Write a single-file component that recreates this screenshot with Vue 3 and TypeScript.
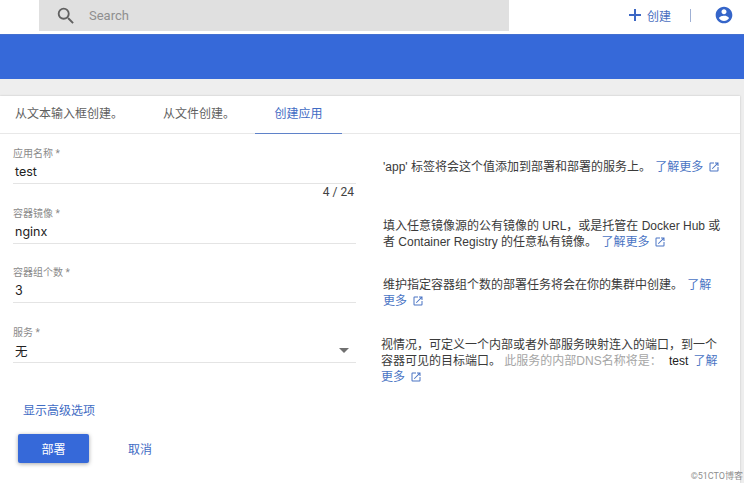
<template>
  <div class="page">
    <header class="topbar">
      <div class="search">
        <svg class="search-icon" viewBox="0 0 24 24" width="22" height="22">
          <path d="M15.5 14h-.79l-.28-.27A6.47 6.47 0 0 0 16 9.5 6.5 6.5 0 1 0 9.5 16c1.61 0 3.09-.59 4.23-1.57l.27.28v.79l5 4.99L20.49 19l-4.99-5zm-6 0C7.01 14 5 11.99 5 9.5S7.01 5 9.5 5 14 7.01 14 9.5 11.99 14 9.5 14z" />
        </svg>
        <span class="search-text">Search</span>
      </div>
      <div class="actions">
        <svg class="plus" viewBox="0 0 14 14" width="14" height="14">
          <path d="M6 1h2v5h5v2H8v5H6V8H1V6h5z" />
        </svg>
        <span class="create">创建</span>
        <span class="divider"></span>
        <svg class="user" viewBox="0 0 24 24" width="20" height="20">
          <path d="M12 2C6.48 2 2 6.48 2 12s4.48 10 10 10 10-4.48 10-10S17.52 2 12 2zm0 3c1.66 0 3 1.34 3 3s-1.34 3-3 3-3-1.34-3-3 1.34-3 3-3zm0 14.2c-2.5 0-4.71-1.28-6-3.22.03-1.99 4-3.08 6-3.08s5.97 1.09 6 3.08c-1.29 1.94-3.5 3.22-6 3.22z" />
        </svg>
      </div>
    </header>
    <div class="band"></div>
    <main class="content">
      <section class="card">
        <nav class="tabs">
          <span v-for="tab in tabs" :key="tab.label" class="tab" :class="{ active: tab.active }" :style="{ width: tab.width + 'px' }">{{ tab.label }}</span>
        </nav>
        <div class="form">
          <div v-for="row in rows" :key="row.label" class="row" :style="{ height: row.height + 'px' }">
            <div class="field">
              <div class="label">{{ row.label }} *</div>
              <div class="value">
                <span>{{ row.value }}</span>
                <i v-if="row.select" class="caret"></i>
              </div>
              <div v-if="row.count" class="count">{{ row.count }}</div>
            </div>
            <p class="help" :class="row.helpClass">
              {{ row.help }}
              <template v-if="row.hint"><span class="muted">{{ row.hint }}</span> <span class="dns">test</span> </template>
              <a class="more">了解更多<svg class="ext" viewBox="0 0 24 24" width="12" height="12"><path d="M19 19H5V5h7V3H5a2 2 0 0 0-2 2v14a2 2 0 0 0 2 2h14a2 2 0 0 0 2-2v-7h-2v7zM14 3v2h3.59l-9.83 9.83 1.41 1.41L19 6.41V10h2V3h-7z" /></svg></a>
            </p>
          </div>
        </div>
        <a class="advanced">显示高级选项</a>
        <div class="buttons">
          <button class="deploy">部署</button>
          <button class="cancel">取消</button>
        </div>
        <span class="mark">©51CTO博客</span>
      </section>
    </main>
  </div>
</template>

<script setup lang="ts">
interface Row {
  label: string
  value: string
  height: number
  help: string
  count?: string
  select?: boolean
  hint?: string
  helpClass?: string
}

const tabs = [
  { label: '从文本输入框创建。', width: 148, active: false },
  { label: '从文件创建。', width: 107, active: false },
  { label: '创建应用', width: 87, active: true },
]

const rows: Row[] = [
  {
    label: '应用名称',
    value: 'test',
    height: 60,
    count: '4 / 24',
    help: "'app' 标签将会这个值添加到部署和部署的服务上。",
    helpClass: 'low',
  },
  {
    label: '容器镜像',
    value: 'nginx',
    height: 59,
    help: '填入任意镜像源的公有镜像的 URL，或是托管在 Docker Hub 或者 Container Registry 的任意私有镜像。',
  },
  {
    label: '容器组个数',
    value: '3',
    height: 60,
    help: '维护指定容器组个数的部署任务将会在你的集群中创建。',
  },
  {
    label: '服务',
    value: '无',
    height: 62,
    select: true,
    help: '视情况，可定义一个内部或者外部服务映射连入的端口，到一个容器可见的目标端口。',
    hint: '此服务的内部DNS名称将是：',
    helpClass: 'shift',
  },
]
</script>

<style>
html,
body {
  margin: 0;
  overflow: hidden;
}
</style>

<style scoped>
.page {
  width: 744px;
  height: 483px;
  overflow: hidden;
  background: #eeeeee;
  font-family: Roboto, "Noto Sans CJK SC", sans-serif;
  color: #212121;
}

.topbar {
  height: 34px;
  background: #fff;
  display: flex;
  justify-content: space-between;
}

.search {
  width: 470px;
  height: 31px;
  margin-left: 39px;
  background: #e0e0e0;
  display: flex;
  align-items: center;
}

.search-icon {
  margin-left: 16px;
  fill: #616161;
}

.search-text {
  margin-left: 12px;
  font-size: 13px;
  color: #8f8f8f;
}

.actions {
  display: flex;
  align-items: center;
  height: 30px;
  padding-right: 10px;
}

.plus {
  fill: #3d68c4;
}

.create {
  margin-left: 5px;
  font-size: 12px;
  color: #4a6fc0;
}

.divider {
  width: 1px;
  height: 13px;
  margin: 0 23px 0 19px;
  background: #9fb0d4;
}

.user {
  fill: #3565c9;
}

.band {
  height: 45px;
  background: #3669d9;
  border-top: 1px solid #4470d0;
  box-sizing: border-box;
}

.content {
  height: 404px;
  padding-top: 17px;
  box-sizing: border-box;
}

.card {
  position: relative;
  width: 740px;
  height: 387px;
  background: #fff;
  box-shadow: 0 0 2px rgba(0, 0, 0, 0.2);
}

.tabs {
  display: flex;
  height: 38px;
  box-sizing: border-box;
  border-bottom: 1px solid #e8e8e8;
}

.tab {
  height: 38px;
  padding-left: 15px;
  line-height: 37px;
  box-sizing: border-box;
  font-size: 12px;
  color: #5f5f5f;
}

.tab.active {
  padding-left: 0;
  text-align: center;
  color: #3f6cc4;
  border-bottom: 1px solid #5f82c9;
}

.form {
  padding-top: 13px;
}

.row {
  display: flex;
}

.field {
  position: relative;
  width: 343px;
  height: 36px;
  margin-left: 13px;
  border-bottom: 1px solid #e4e4e4;
}

.label {
  height: 14px;
  font-size: 10px;
  line-height: 13px;
  color: #8a8a8a;
}

.value {
  display: flex;
  justify-content: space-between;
  align-items: center;
  height: 21px;
  padding: 0 2px;
  font-family: Inter, "Noto Sans CJK SC", sans-serif;
  font-size: 12.5px;
  color: #212121;
}

.caret {
  width: 0;
  height: 0;
  margin-right: 5px;
  border-left: 5px solid transparent;
  border-right: 5px solid transparent;
  border-top: 5px solid #707070;
}

.count {
  position: absolute;
  right: 2px;
  top: 37px;
  font-size: 12px;
  line-height: 16px;
  color: #424242;
}

.help {
  width: 338px;
  margin: 11px 0 0 27px;
  font-family: "Liberation Sans", "Noto Sans CJK SC", sans-serif;
  font-size: 12px;
  line-height: 16px;
  color: #3a3a3a;
}

.help.low {
  margin-top: 12px;
}

.help.shift {
  margin-left: 25px;
}

.muted {
  color: #a5a5a5;
}

.dns {
  margin: 0 4px;
  color: #212121;
}

.more {
  margin-left: 1px;
  color: #4a74c4;
}

.ext {
  margin-left: 5px;
  vertical-align: -2px;
  fill: #4a74c4;
}

.advanced {
  display: block;
  margin: 15px 0 0 23px;
  font-size: 12px;
  line-height: 16px;
  color: #3f6cc4;
}

.buttons {
  display: flex;
  align-items: center;
  margin: 15px 0 0 18px;
}

button {
  border: none;
  font-family: inherit;
  font-size: 12px;
  padding: 0;
}

.deploy {
  width: 71px;
  height: 29px;
  border-radius: 2px;
  color: #fff;
  background: #3669d9;
  box-shadow: 0 1px 4px rgba(0, 0, 0, 0.35);
}

.cancel {
  margin-left: 39px;
  color: #3f6cc4;
  background: none;
}

.mark {
  position: absolute;
  right: -3px;
  bottom: 1px;
  font-size: 9px;
  color: #8f8f8f;
}
</style>
